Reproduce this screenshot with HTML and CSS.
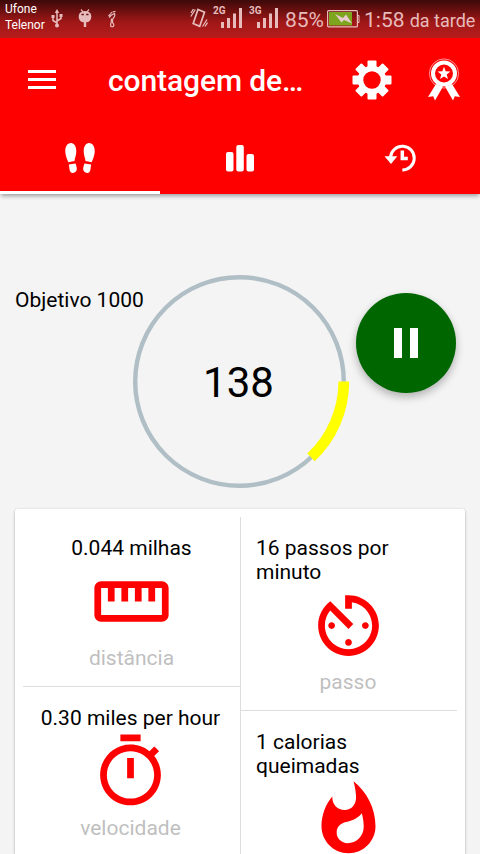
FILE: index.html
```html
<!DOCTYPE html>
<html lang="pt">
<head>
    <meta charset="UTF-8">
    <meta name="viewport" content="width=device-width, initial-scale=1.0">
    <title>contagem de passos</title>
    <link rel="stylesheet" href="styles.css">
</head>
<body>
    <div class="status-bar">
        <div class="carrier">Ufone<br>Telenor</div>
        <svg class="usb" width="12" height="19" viewBox="0 0 12 19" fill="none" stroke="#e6bcbc" stroke-width="1.500">
            <path d="M6 3v13M6 14L2 11.500V8M6 12l4-2.500V6"/>
            <path d="M6 0l2.200 4H3.800zM.5 6h3v3h-3zM8.500 5h3v3h-3z" fill="#e6bcbc" stroke="none"/>
            <circle cx="6" cy="16.500" r="2" fill="#e6bcbc" stroke="none"/>
        </svg>
        <svg class="droid" width="14" height="19" viewBox="0 0 14 19">
            <path d="M3 .5l2 2.300M11 .5L9 2.800" stroke="#e6bcbc" stroke-width="1.200"/>
            <path d="M1.500 4.500Q3 2 7 2t5.500 2.500q1 1.500.8 4Q12.500 13 8.200 13.300V18H5.800v-4.700Q1.500 13 .7 8.500q-.2-2.500.8-4z" fill="#e6bcbc"/>
            <path d="M3.500 5.500h2.300M8.200 5.500h2.300" stroke="#651010" stroke-width="1.300"/>
        </svg>
        <svg class="foot" width="9" height="17" viewBox="0 0 9 17" fill="none" stroke="#e6bcbc" stroke-width="1.200">
            <path d="M.5 5l2-2M2.500 2.500l1.800-1.300M4.800.8L7.500.4M1 6.500Q3.500 3.500 6.500 2.500 7.500 5 5 7.500q-1 2-.2 4.500 1.700 1.500.7 3.300-1.500.8-2.500.2-.8-1.500 0-3.500.6-2.500.3-4.500"/>
        </svg>
        <svg class="vibrate" width="18" height="20" viewBox="0 0 18 20" fill="none" stroke="#e6bcbc" stroke-width="1.300">
            <path d="M8 1.500l6.500 2.800-4.800 14L3.200 15.500z" stroke-width="1.700"/>
            <path d="M1 5l2.500-4M.8 8.500l4.500-7M12.500 18.500l4.500-7M15 18.500l2.500-4"/>
        </svg>
        <div class="signal">
            <span>2G</span>
            <svg width="22" height="20" viewBox="0 0 22 20" fill="#e6bcbc"><path d="M0 14h3v6H0zM6 10h3v10H6zM12 5.500h3V20h-3zM18 0h3v20h-3z"/></svg>
        </div>
        <div class="signal">
            <span>3G</span>
            <svg width="22" height="20" viewBox="0 0 22 20" fill="#e6bcbc"><path d="M0 14h3v6H0zM6 10h3v10H6zM12 5.500h3V20h-3zM18 0h3v20h-3z"/></svg>
        </div>
        <span class="percent">85%</span>
        <svg class="battery" width="33" height="18" viewBox="0 0 33 18">
            <rect x=".6" y=".6" width="29.800" height="16.300" rx="1" fill="none" stroke="#e6bcbc" stroke-width="1.200"/>
            <path d="M31 5.500h1v7h-1" fill="none" stroke="#e6bcbc"/>
            <path d="M2 2h23v13.500H2z" fill="#7da51e"/>
            <path d="M8 4l8 4 3-3.500 6 9-8-3.500-2.500 2.500z" fill="#e6cccc"/>
        </svg>
        <span class="time">1:58 <small>da tarde</small></span>
    </div>

    <header class="header">
        <div class="toolbar">
            <div class="menu"><i></i><i></i><i></i></div>
            <h1>contagem de…</h1>
            <svg class="gear" width="40" height="40" viewBox="-20 -20 40 40" fill="#fff">
                <defs><rect id="tooth" x="-4.500" y="-19.500" width="9" height="9" rx="1"/></defs>
                <circle r="11.500" fill="none" stroke="#fff" stroke-width="5.500"/>
                <use href="#tooth"/>
                <use href="#tooth" transform="rotate(45)"/>
                <use href="#tooth" transform="rotate(90)"/>
                <use href="#tooth" transform="rotate(135)"/>
                <use href="#tooth" transform="rotate(180)"/>
                <use href="#tooth" transform="rotate(225)"/>
                <use href="#tooth" transform="rotate(270)"/>
                <use href="#tooth" transform="rotate(315)"/>
            </svg>
            <svg class="medal" width="32" height="43" viewBox="0 0 32 43">
                <circle cx="16" cy="15.500" r="14.600" fill="none" stroke="#fff" stroke-width=".8" opacity=".7"/>
                <circle cx="16" cy="15.500" r="11" fill="none" stroke="#fff" stroke-width="4"/>
                <path d="M16 8.700l1.700 4.500 4.800.2-3.800 3 1.300 4.600-4-2.600-4 2.600 1.300-4.600-3.800-3 4.800-.2z" fill="#fff"/>
                <path d="M8 26l7 2.500-8 14-1.800-4.200L0 39zM24 26l-7 2.500 8 14 1.800-4.200 5.200.7z" fill="#fff"/>
            </svg>
        </div>
        <nav class="tabs">
            <div class="tab active">
                <svg width="32" height="32" viewBox="0 0 32 32" fill="#fff">
                    <g id="shoe"><path d="M7 1C3 1 1 5 1.300 10c.3 4 1.700 7 3 10.300l6.200-1.200c.2-3 1.800-5.500 1.800-9.500C12.300 4.500 10.500 1 7 1zM4.800 22.600l6.700-1c1 3 1.800 5 1 7-.8 2.200-4.500 3.200-6 1.500-1.300-1.500-1-4.500-1.700-7.500z"/></g>
                    <use href="#shoe" transform="matrix(-1 0 0 1 32 0)"/>
                </svg>
            </div>
            <div class="tab">
                <svg width="28" height="28" viewBox="0 0 28 28" fill="#fff">
                    <rect y="8" width="7.500" height="19.500" rx="2"/><rect x="10.300" y="1" width="7.500" height="26.500" rx="2"/><rect x="20.500" y="10" width="7.500" height="17.500" rx="2"/>
                </svg>
            </div>
            <div class="tab">
                <svg width="32" height="28" viewBox="0 0 32 28" fill="none" stroke="#fff">
                    <path d="M6.500 13A11.900 11.900 0 1 1 18.300 26" stroke-width="3"/>
                    <path d="M.5 12.300h12.800L7 20z" fill="#fff" stroke="none"/>
                    <path d="M18.300 6.500v8h5.500" stroke-width="3.500"/>
                </svg>
            </div>
        </nav>
    </header>

    <section class="counter">
        <div class="goal">Objetivo 1000</div>
        <div class="ring">
            <svg width="217" height="213" viewBox="0 0 217 213" fill="none">
                <circle cx="106.500" cy="106.500" r="104.300" stroke="#b0bec5" stroke-width="4.400"/>
                <path d="M210.800 106.500A104.300 104.300 0 0 1 178 182.400" stroke="#ff0" stroke-width="10.800"/>
            </svg>
            <span class="steps">138</span>
        </div>
        <button class="pause" aria-label="Pausar"><i></i><i></i></button>
    </section>

    <main class="card">
        <div class="column left">
            <div class="stat">
                <p>0.044 milhas</p>
                <svg viewBox="0 0 24 24"><path d="M21 6H3c-1.100 0-2 .9-2 2v8c0 1.100.9 2 2 2h18c1.100 0 2-.9 2-2V8c0-1.100-.9-2-2-2zm0 10H3V8h2v4h2V8h2v4h2V8h2v4h2V8h2v4h2V8h2v8z"/></svg>
                <span>distância</span>
            </div>
            <div class="stat speed">
                <p>0.30 miles per hour</p>
                <svg viewBox="0 0 24 24"><path d="M15 1H9v2h6V1zm-4 13h2V8h-2v6zm8.030-6.610l1.420-1.420c-.43-.51-.9-.99-1.410-1.410l-1.420 1.420C16.070 4.740 14.120 4 12 4c-4.970 0-9 4.030-9 9s4.020 9 9 9 9-4.030 9-9c0-2.120-.74-4.070-1.970-5.610zM12 20c-3.870 0-7-3.130-7-7s3.130-7 7-7 7 3.130 7 7-3.130 7-7 7z"/></svg>
                <span>velocidade</span>
            </div>
        </div>
        <div class="column right">
            <div class="stat">
                <p>16 passos por minuto</p>
                <svg viewBox="0 0 24 24"><path d="M11 17c0 .55.45 1 1 1s1-.45 1-1-.45-1-1-1-1 .45-1 1zm0-14v4h2V5.080c3.390.49 6 3.390 6 6.920 0 3.870-3.130 7-7 7s-7-3.130-7-7c0-1.680.59-3.220 1.580-4.420L12 13l1.410-1.410-6.800-6.800v.02C4.420 6.450 3 9.050 3 12c0 4.970 4.020 9 9 9 4.970 0 9-4.030 9-9s-4.030-9-9-9h-1zm7 9c0-.55-.45-1-1-1s-1 .45-1 1 .45 1 1 1 1-.45 1-1zM6 12c0 .55.45 1 1 1s1-.45 1-1-.45-1-1-1-1 .45-1 1z"/></svg>
                <span>passo</span>
            </div>
            <div class="stat">
                <p>1 calorias queimadas</p>
                <svg viewBox="0 0 24 24"><path d="M13.500.67s.74 2.650.74 4.800c0 2.060-1.350 3.730-3.410 3.730-2.070 0-3.630-1.670-3.630-3.730l.03-.36C5.210 7.510 4 10.620 4 14c0 4.420 3.580 8 8 8s8-3.580 8-8C20 8.610 17.410 3.800 13.500.67zM11.710 19c-1.780 0-3.220-1.400-3.220-3.140 0-1.620 1.050-2.760 2.810-3.120 1.770-.36 3.600-1.210 4.620-2.580.39 1.290.59 2.650.59 4.040 0 2.650-2.150 4.800-4.800 4.800z"/></svg>
            </div>
        </div>
    </main>
</body>
</html>
```
FILE: styles.css
```css
* {
    box-sizing: border-box;
}
body {
    display: flex;
    flex-direction: column;
    margin: 0;
    height: 100vh;
    overflow: hidden;
    background-color: #f4f4f4;
    color: #000;
    font-family: Roboto, sans-serif;
    font-size: 21px;
}
svg {
    display: block;
    flex: none;
}
.status-bar {
    display: flex;
    flex: none;
    align-items: flex-start;
    height: 38px;
    padding-left: 5px;
    background: linear-gradient(#3c0909, #a01717 58%, #b71c1c);
    color: #e6bcbc;
    white-space: nowrap;
}
.carrier {
    width: 46px;
    padding-top: 1px;
    color: #fff;
    font-size: 12px;
    line-height: 16px;
}
.usb {
    margin-top: 9px;
}
.droid {
    margin: 9px 0 0 15px;
}
.foot {
    margin: 11px 0 0 16px;
}
.vibrate {
    margin: 8px 0 0 73px;
}
.signal {
    display: flex;
    width: 36px;
    margin-left: 5px;
}
.signal + .signal {
    margin-left: 0;
}
.signal span {
    width: 8px;
    margin-top: 5px;
    font-size: 10px;
    font-weight: 700;
    line-height: 12px;
}
.signal svg {
    margin-top: 8px;
}
.percent {
    width: 42px;
    margin-top: 8px;
    font-size: 21px;
    line-height: 24px;
}
.battery {
    margin-top: 10px;
}
.time {
    margin: 8px 0 0 4px;
    font-size: 21px;
    line-height: 24px;
}
.time small {
    font-size: 18px;
}
.header {
    flex: none;
    height: 156px;
    background-color: #f00;
    box-shadow: 0 3px 4px -1px rgba(0, 0, 0, 0.35);
}
.toolbar {
    display: flex;
    align-items: center;
    height: 84px;
    padding-left: 28px;
}
.menu {
    display: grid;
    gap: 5px;
    width: 28px;
    margin-top: -1px;
}
.menu i {
    height: 3px;
    background-color: #fff;
}
.toolbar h1 {
    width: 244px;
    margin: 0 0 0 52px;
    color: #fff;
    font-size: 30px;
    font-weight: 500;
    letter-spacing: -0.1px;
}
.medal {
    margin: -2px 0 0 36px;
}
.tabs {
    display: grid;
    grid-template-columns: repeat(3, 1fr);
    height: 72px;
}
.tab {
    display: flex;
    align-items: center;
    justify-content: center;
    padding-top: 2px;
    border-bottom: 3px solid transparent;
}
.tab.active {
    border-color: #fff;
}
.counter {
    display: flex;
    flex: none;
    align-items: flex-start;
    height: 315px;
    padding: 81px 0 0 15px;
}
.goal {
    width: 118px;
    margin-top: 13px;
    line-height: 24px;
    white-space: nowrap;
}
.ring {
    display: grid;
    width: 217px;
}
.ring svg,
.steps {
    grid-area: 1 / 1;
}
.steps {
    width: 211px;
    margin-top: 2px;
    align-self: center;
    font-size: 42px;
    line-height: 48px;
    text-align: center;
}
.pause {
    display: flex;
    align-items: center;
    justify-content: center;
    gap: 8px;
    width: 100px;
    height: 100px;
    margin: 18px 0 0 6px;
    padding: 0;
    border: none;
    border-radius: 50%;
    background-color: #060;
    box-shadow: 0 4px 9px rgba(0, 0, 0, 0.28);
}
.pause i {
    width: 8px;
    height: 30px;
    background-color: #fff;
}
.card {
    display: grid;
    flex: 1;
    grid-template-columns: 218px 216px;
    min-height: 0;
    margin: 0 15px;
    padding: 8px 8px 0;
    border-radius: 3px 3px 0 0;
    background-color: #fff;
    box-shadow: 0 1px 3px rgba(0, 0, 0, 0.32);
    overflow: hidden;
}
.left {
    border-right: 1px solid #ddd;
}
.stat {
    display: flex;
    flex-direction: column;
    align-items: center;
    padding: 19px 16px 16px;
    border-bottom: 1px solid #ddd;
    line-height: 24px;
}
.speed {
    padding: 19px 17px 0 15px;
    border: none;
}
.right .stat {
    padding: 19px 17px 16px 15px;
}
.right .stat:last-child {
    padding-bottom: 0;
    border: none;
}
.right .stat:last-child svg {
    margin-bottom: 0;
}
.stat p {
    margin: 0;
}
.left p {
    white-space: nowrap;
}
.stat svg {
    width: 81px;
    height: 81px;
    margin: 1px 0 4px;
    fill: #f00;
}
.stat span {
    color: #bfbfbf;
}
```
